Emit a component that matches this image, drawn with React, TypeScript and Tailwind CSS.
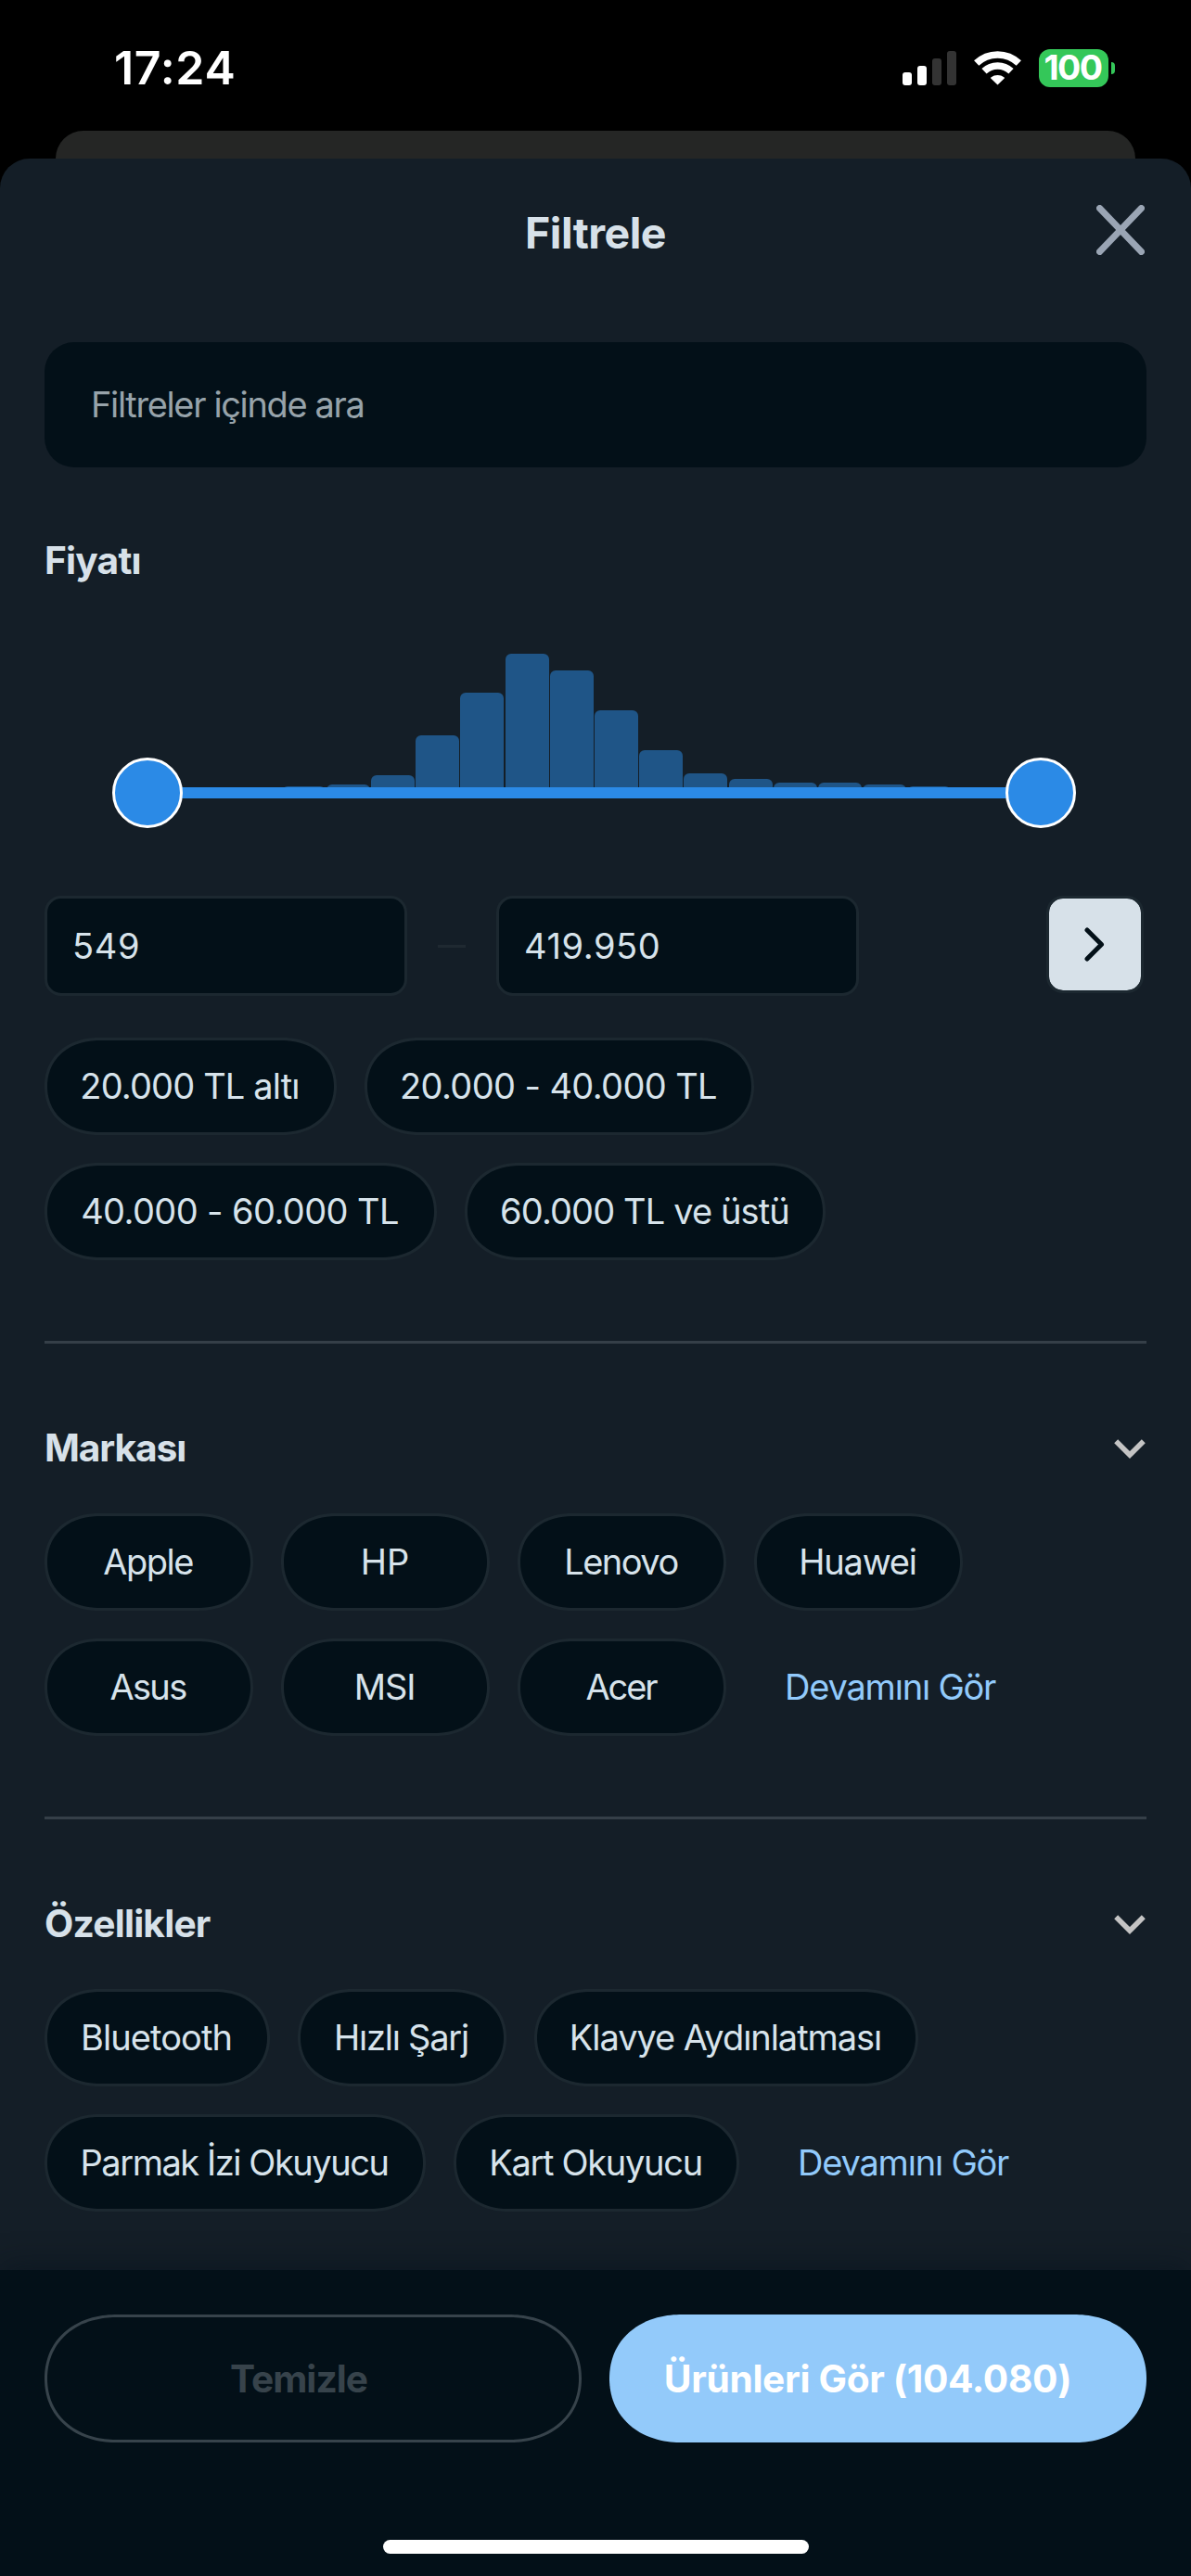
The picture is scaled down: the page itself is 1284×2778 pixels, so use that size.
type ChipItem = { label: string; box: string };

const priceRanges: ChipItem[] = [
  { label: "20.000 TL altı", box: "w-[315px] tracking-[-0.85px]" },
  { label: "20.000 - 40.000 TL", box: "w-[420px] tracking-[-0.62px]" },
  { label: "40.000 - 60.000 TL", box: "w-[423px] tracking-[-0.6px]" },
  { label: "60.000 TL ve üstü", box: "w-[389px] pl-px tracking-[-0.88px]" },
];

const brands: ChipItem[] = [
  { label: "Apple", box: "w-[225px] tracking-[-1.5px]" },
  { label: "HP", box: "w-[225px] pl-px" },
  { label: "Lenovo", box: "w-[225px] tracking-[-1.5px]" },
  { label: "Huawei", box: "w-[225px] tracking-[-1.22px]" },
  { label: "Asus", box: "w-[225px] tracking-[-1.7px]" },
  { label: "MSI", box: "w-[225px] tracking-[-1.1px]" },
  { label: "Acer", box: "w-[225px] tracking-[-2.1px]" },
];

const features: ChipItem[] = [
  { label: "Bluetooth", box: "w-[243px] tracking-[-0.9px]" },
  { label: "Hızlı Şarj", box: "w-[225px] tracking-[-1.25px]" },
  { label: "Klavye Aydınlatması", box: "w-[414px] tracking-[-1.05px]" },
  { label: "Parmak İzi Okuyucu", box: "w-[411px] tracking-[-1.45px]" },
  { label: "Kart Okuyucu", box: "w-[308px] tracking-[-1.3px]" },
];

// Bar heights in pixels, measured from the middle of the slider track.
const histogram = [0, 0, 6.4, 7, 9, 19, 62, 108, 150, 132, 89, 46, 21.5, 15, 11, 11, 9, 7, 6.4, 0];

function StatusBar() {
  return (
    <div className="flex h-[141px] items-center justify-between pt-[5px] pr-[82px] pl-[123px] text-white">
      <span className="text-[50px] leading-none font-semibold tracking-[0.7px]">17:24</span>
      <div className="flex items-center">
        <div className="flex h-[37px] items-end gap-[6px]">
          <span className="h-[14px] w-[10px] rounded-[3px] bg-white" />
          <span className="h-[21px] w-[10px] rounded-[3px] bg-white" />
          <span className="h-[29px] w-[10px] rounded-[3px] bg-[#333333]" />
          <span className="h-[37px] w-[10px] rounded-[3px] bg-[#333333]" />
        </div>
        <svg className="ml-[19px] h-[37px] w-[51px]" viewBox="0 0 51 37" fill="none">
          <path d="M2.7 13.1A33 33 0 0 1 48.3 13.1" stroke="#fff" strokeWidth="7.6" />
          <path d="M11 21.8A21 21 0 0 1 40 21.8" stroke="#fff" strokeWidth="7.6" />
          <path d="M25.5 36.6L18.2 29.6Q17.6 28.8 18.6 28.2A11.5 11.5 0 0 1 32.4 28.2Q33.4 28.8 32.8 29.6Z" fill="#fff" />
        </svg>
        <div className="ml-[19px] flex h-[41px] w-[75px] items-center justify-center rounded-[12px] bg-[#34c759] pr-[2px]">
          <span className="text-[37.5px] leading-none font-bold tracking-[-1.6px]">100</span>
        </div>
        <span className="ml-[3px] h-[13px] w-[4px] rounded-r-full bg-[#34c759]" />
      </div>
    </div>
  );
}

function Chip({ label, box }: ChipItem) {
  return (
    <button
      className={`flex h-[105px] shrink-0 items-center justify-center rounded-[59px/52.5px] border-[3px] border-[#1c2830] bg-[#031018] pr-[2px] pb-[2px] text-[38px] leading-none whitespace-nowrap text-[#d7e3eb] [corner-shape:superellipse(1.1)] ${box}`}
    >
      {label}
    </button>
  );
}

function MoreLink() {
  return (
    <a className="flex h-[105px] items-center pb-[2px] pl-[33px] text-[38px] leading-none tracking-[-1.2px] whitespace-nowrap text-[#92cafb]">
      Devamını Gör
    </a>
  );
}

function Section({ title, tracking, items }: { title: string; tracking: string; items: ChipItem[] }) {
  return (
    <section>
      <div className="mt-[87px] h-[3px] bg-[#353f48]" />
      <div className="mt-[87px] flex h-[50px] items-center justify-between pr-px">
        <h2 className={`pt-[2px] text-[40.7px] leading-none font-[650] text-[#d7e1e9] ${tracking}`}>{title}</h2>
        <svg className="mt-[3px] h-[21px] w-[34px]" viewBox="0 0 34 21" fill="none">
          <path d="M2.2 2.2L17 17L31.8 2.2" stroke="#c4c4c4" strokeWidth="5.6" />
        </svg>
      </div>
      <div className="mt-[46px] flex flex-wrap gap-[30px]">
        {items.map((item) => (
          <Chip key={item.label} {...item} />
        ))}
        <MoreLink />
      </div>
    </section>
  );
}

function PriceSlider() {
  return (
    <div className="relative mt-[76px] h-[188px] pr-[114px] pl-[111px]">
      <div className="flex h-[150px] items-end gap-[1.2px]">
        {histogram.map((height, i) => (
          <span key={i} className="flex-1 rounded-t-[6px] bg-[#1f5587]" style={{ height }} />
        ))}
      </div>
      <div className="absolute top-[144px] right-[114px] left-[111px] h-[12px] bg-[#2b8ae6]" />
      <span className="absolute top-[112px] left-[73px] size-[76px] rounded-full border-[3px] border-white bg-[#2b8ae6]" />
      <span className="absolute top-[112px] right-[76px] size-[76px] rounded-full border-[3px] border-white bg-[#2b8ae6]" />
    </div>
  );
}

function PriceField({ value, box }: { value: string; box: string }) {
  return (
    <div
      className={`flex h-[108px] items-center rounded-[18px] border-[3px] border-[#1c2830] bg-[#031018] pl-[27px] text-[38px] leading-none text-[#d7e3eb] ${box}`}
    >
      {value}
    </div>
  );
}

export default function App() {
  return (
    <div className="flex h-[2778px] w-[1284px] flex-col overflow-hidden bg-black font-['Inter',sans-serif]">
      <StatusBar />
      <div className="mx-[60px] h-[30px] shrink-0 rounded-t-[30px] bg-[#252625]" />
      <main className="flex flex-1 flex-col rounded-t-[32px] bg-[#141e27]">
        <header className="grid h-[160px] grid-cols-[1fr_auto_1fr] items-center px-[48px]">
          <h1 className="col-start-2 text-[46.5px] leading-none font-[650] tracking-[-0.5px] text-[#d7e1e9]">
            Filtrele
          </h1>
          <svg className="mr-[2px] mb-[7px] h-[54px] w-[52px] justify-self-end" viewBox="0 0 52 54" fill="none">
            <path d="M3.5 3.5L48.5 50.5M48.5 3.5L3.5 50.5" stroke="#9aa5b4" strokeWidth="7" strokeLinecap="round" />
          </svg>
        </header>

        <div className="flex flex-1 flex-col px-[48px]">
          <div className="mt-[38px] flex h-[135px] items-center rounded-[32px] bg-[#031018] pb-[2px] pl-[50px] text-[38px] leading-none tracking-[-1.36px] text-[#97a3aa]">
            Filtreler içinde ara
          </div>

          <h2 className="mt-[75px] flex h-[50px] items-center pt-[2px] text-[40.7px] leading-none font-[650] tracking-[-0.8px] text-[#d7e1e9]">
            Fiyatı
          </h2>
          <PriceSlider />

          <div className="mt-[73px] flex">
            <PriceField value="549" box="w-[391px] tracking-[0.7px]" />
            <div className="mx-[33px] h-[3px] w-[30px] self-center bg-[#1f2931]" />
            <PriceField value="419.950" box="w-[391px] tracking-[0.6px]" />
            <button className="mr-[3px] ml-auto flex h-[105px] w-[105px] items-center justify-center rounded-[18px] border-[3px] border-[#1c2830] bg-[#d7e1e9] bg-clip-padding pr-[2px]">
              <svg className="h-[37px] w-[22px]" viewBox="0 0 22 37" fill="none">
                <path d="M3 3L18.5 18.5L3 34" stroke="#031018" strokeWidth="5" strokeLinecap="round" strokeLinejoin="round" />
              </svg>
            </button>
          </div>

          <div className="mt-[45px] flex flex-wrap gap-[30px]">
            {priceRanges.map((item) => (
              <Chip key={item.label} {...item} />
            ))}
          </div>

          <Section title="Markası" tracking="tracking-[-1.1px]" items={brands} />
          <Section title="Özellikler" tracking="tracking-[-0.8px]" items={features} />
        </div>

        <footer className="h-[330px] shrink-0 bg-[#031018] px-[48px] pt-[48px] shadow-[0_-6px_30px_rgba(3,16,24,0.4)]">
          <div className="flex gap-[30px]">
            <button className="flex h-[138px] w-[579px] items-center justify-center rounded-[78px/69px] border-[3px] border-[#37434b] pt-[2px] pr-[31px] text-[40.7px] leading-none font-[650] tracking-[-1px] text-[#37434b] [corner-shape:superellipse(1.1)]">
              Temizle
            </button>
            <button className="flex h-[138px] w-[579px] items-center justify-center rounded-[78px/69px] bg-[#93cafa] pt-[2px] pr-[22px] text-[40.7px] leading-none font-[650] tracking-[-0.35px] text-white [corner-shape:superellipse(1.1)]">
              Ürünleri Gör (104.080)
            </button>
          </div>
          <div className="mx-auto mt-[105px] h-[15px] w-[459px] rounded-full bg-white" />
        </footer>
      </main>
    </div>
  );
}
